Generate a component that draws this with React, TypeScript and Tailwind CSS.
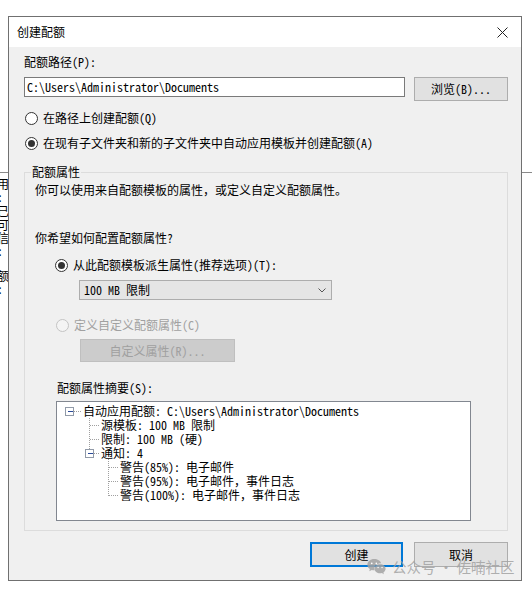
import clsx from "clsx";

const ui = "font-[family-name:'Noto_Sans_Mono_CJK_SC','Noto_Sans_CJK_SC',monospace] text-[12px] leading-[14px] text-black";

const treeRows = [
  { pad: "pl-[26px]", text: "自动应用配额: C:\\Users\\Administrator\\Documents" },
  { pad: "pl-[44px]", text: "源模板: 100 MB 限制" },
  { pad: "pl-[44px]", text: "限制: 100 MB (硬)" },
  { pad: "pl-[44px]", text: "通知: 4" },
  { pad: "pl-[63px]", text: "警告(85%): 电子邮件" },
  { pad: "pl-[63px]", text: "警告(95%): 电子邮件，事件日志" },
  { pad: "pl-[63px]", text: "警告(100%): 电子邮件，事件日志" },
];

// fragments of the window behind the dialog
const behind = [
  { mt: "mt-0", t: "用" },
  { mt: "mt-0", t: ":" },
  { mt: "mt-[1px]", t: "已" },
  { mt: "mt-[1px]", t: "可" },
  { mt: "mt-0", t: "信" },
  { mt: "mt-0", t: ":" },
  { mt: "mt-[12px]", t: "额" },
  { mt: "mt-0", t: ":" },
];

function Radio({ checked, disabled }: { checked?: boolean; disabled?: boolean }) {
  return (
    <span
      className={clsx(
        "flex h-[13px] w-[13px] shrink-0 items-center justify-center rounded-full border",
        disabled ? "border-[#c4c4c4] bg-[#f4f4f4]" : "border-[#333] bg-white"
      )}
    >
      {checked && <span className="h-[7px] w-[7px] rounded-full bg-[#333]" />}
    </span>
  );
}

function Btn({ children, primary, className }: { children: React.ReactNode; primary?: boolean; className?: string }) {
  return (
    <div
      className={clsx(
        "flex items-center justify-center bg-[#e1e1e1]",
        primary ? "border-2 border-[#0078d7]" : "border border-[#adadad]",
        className
      )}
    >
      {children}
    </div>
  );
}

function Expander({ x, y }: { x: number; y: number }) {
  return (
    <g shapeRendering="crispEdges">
      <rect x={x - 4.5} y={y - 4.5} width={8} height={8} fill="white" stroke="#919aa8" />
      <line x1={x - 2} y1={y - 0.5} x2={x + 3} y2={y - 0.5} stroke="#2a4a9a" />
    </g>
  );
}

function TreeLines() {
  const dot = { stroke: "#a0a0a0", strokeDasharray: "1 1", shapeRendering: "crispEdges" as const };
  return (
    <svg className="pointer-events-none absolute inset-0" width="413" height="118">
      {/* root */}
      <line x1={17} y1={9.5} x2={24} y2={9.5} {...dot} />
      {/* level 1 */}
      <line x1={32.5} y1={16} x2={32.5} y2={47} {...dot} />
      <line x1={33} y1={23.5} x2={42} y2={23.5} {...dot} />
      <line x1={33} y1={37.5} x2={42} y2={37.5} {...dot} />
      <line x1={37} y1={51.5} x2={42} y2={51.5} {...dot} />
      {/* level 2 */}
      <line x1={51.5} y1={57} x2={51.5} y2={94} {...dot} />
      <line x1={52} y1={65.5} x2={61} y2={65.5} {...dot} />
      <line x1={52} y1={79.5} x2={61} y2={79.5} {...dot} />
      <line x1={52} y1={93.5} x2={61} y2={93.5} {...dot} />
      <Expander x={13} y={10} />
      <Expander x={33} y={52} />
    </svg>
  );
}

function WeChat() {
  return (
    <svg width="19" height="18" viewBox="0 0 24 22" fill="currentColor">
      <path d="M9 1C4.3 1 .5 4.2.5 8.1c0 2.2 1.2 4.2 3.1 5.5L2.9 16.3l3.1-1.6c1 .3 2 .4 3 .4h.6c-.2-.6-.3-1.3-.3-2 0-3.8 3.6-6.900 8-6.9h.5C17 3.3 13.4 1 9 1z" />
      <path d="M23.5 13.2c0-3.2-3.1-5.8-7-5.8s-7 2.6-7 5.8 3.1 5.8 7 5.8c.8 0 1.6-.1 2.300-.3l2.5 1.4-.6-2.2c1.7-1.1 2.8-2.8 2.8-4.7z" />
      <circle cx="6" cy="6.3" r="1.1" fill="white" />
      <circle cx="11.8" cy="6.3" r="1.1" fill="white" />
      <circle cx="14" cy="11.6" r="0.9" fill="white" />
      <circle cx="19" cy="11.6" r="0.9" fill="white" />
    </svg>
  );
}

export default function App() {
  return (
    <div className={clsx("relative h-[589px] w-[532px] overflow-hidden bg-white", ui)}>
      {/* window behind the dialog */}
      <div className="absolute left-0 right-0 top-[172px] h-px bg-[#8a8a8a]" />
      <div className="absolute left-0 top-[177px] w-[8px] overflow-hidden">
        <div className="-ml-[3px] flex flex-col">
          {behind.map((b, i) => (
            <span key={i} className={clsx("h-[13px] text-[12px] leading-[13px]", b.mt)}>
              {b.t}
            </span>
          ))}
        </div>
      </div>

      {/* dialog */}
      <div className="absolute left-[8px] top-[16px] flex w-[514px] flex-col border border-[#707070] bg-[#f0f0f0]">
        <div className="flex h-[30px] items-center justify-between bg-white pl-[8px] pr-[13px]">
          <span className="font-['Noto_Sans_CJK_SC',sans-serif] text-[12px]">创建配额</span>
          <svg width="11" height="11" viewBox="0 0 11 11" stroke="#222" strokeWidth="1">
            <path d="M0.5 0.5L10.5 10.5M10.5 0.5L0.5 10.5" />
          </svg>
        </div>

        <div className="flex flex-col pb-[13px] pl-[15px] pr-[13px] pt-[8px]">
          <div>配额路径(P):</div>
          <div className="mt-[8px] flex items-start">
            <div className="flex h-[20px] w-[381px] items-center border border-[#7a7a7a] bg-white pl-[2px]">
              C:\Users\Administrator\Documents
            </div>
            <Btn className="ml-auto h-[24px] w-[94px]">浏览(B)...</Btn>
          </div>

          <div className="mt-[10px] flex items-center gap-[5px] pl-[1px]">
            <Radio />
            <span>在路径上创建配额(Q)</span>
          </div>
          <div className="mt-[11px] flex items-center gap-[5px] pl-[1px]">
            <Radio checked />
            <span>在现有子文件夹和新的子文件夹中自动应用模板并创建配额(A)</span>
          </div>

          {/* group box */}
          <div className="relative mt-[22px] flex h-[359px] flex-col border border-[#dcdcdc] pl-[10px] pt-[10px]">
            <span className="absolute left-[6px] top-[-8px] bg-[#f0f0f0] px-px">配额属性</span>
            <div>你可以使用来自配额模板的属性，或定义自定义配额属性。</div>
            <div className="mt-[34px]">你希望如何配置配额属性?</div>
            <div className="ml-[20px] mt-[13px] flex items-center gap-[5px]">
              <Radio checked />
              <span>从此配额模板派生属性(推荐选项)(T):</span>
            </div>
            <div className="ml-[44px] mt-[8px] flex h-[20px] w-[253px] items-center justify-between border border-[#adadad] bg-[#e5e5e5] pl-[4px] pr-[5px]">
              <span>100 MB 限制</span>
              <svg width="8" height="5" viewBox="0 0 8 5" fill="none" stroke="#555">
                <path d="M0.5 0.5L4 4L7.5 0.5" />
              </svg>
            </div>
            <div className="ml-[21px] mt-[18px] flex items-center gap-[5px] text-[#a0a0a0]">
              <Radio disabled />
              <span>定义自定义配额属性(C)</span>
            </div>
            <div className="ml-[45px] mt-[7px] flex h-[23px] w-[155px] items-center justify-center border border-[#bfbfbf] bg-[#cccccc] text-[#a0a0a0]">
              自定义属性(R)...
            </div>
            <div className="ml-[22px] mt-[19px]">配额属性摘要(S):</div>
            <div className="relative ml-[21px] mt-[6px] flex h-[120px] w-[415px] flex-col border border-[#828790] bg-white pt-[2px]">
              <TreeLines />
              {treeRows.map((r) => (
                <div key={r.text} className={clsx("h-[14px] whitespace-pre", r.pad)}>
                  {r.text}
                </div>
              ))}
            </div>
          </div>

          <div className="mt-[11px] flex justify-end gap-[11px] font-['Noto_Sans_CJK_SC',sans-serif]">
            <Btn primary className="h-[25px] w-[93px]">创建</Btn>
            <Btn className="h-[25px] w-[94px]">取消</Btn>
          </div>
        </div>
      </div>

      {/* watermark */}
      <div className="absolute left-[367px] top-[557px] flex items-center gap-[6px] font-['Noto_Sans_CJK_SC',sans-serif] text-[14.5px] leading-[20px] text-[#a2a2a2]/85">
        <WeChat />
        <span>公众号 · 佐喃社区</span>
      </div>
    </div>
  );
}
